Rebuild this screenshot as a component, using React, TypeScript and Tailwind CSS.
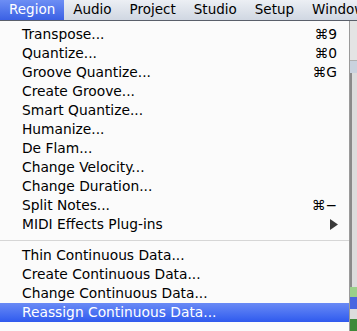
import React from 'react';

type Item = { label: string; shortcut?: string; submenu?: boolean; active?: boolean };

const topItems: Item[] = [
  { label: 'Transpose...', shortcut: '⌘9' },
  { label: 'Quantize...', shortcut: '⌘0' },
  { label: 'Groove Quantize...', shortcut: '⌘G' },
  { label: 'Create Groove...' },
  { label: 'Smart Quantize...' },
  { label: 'Humanize...' },
  { label: 'De Flam...' },
  { label: 'Change Velocity...' },
  { label: 'Change Duration...' },
  { label: 'Split Notes...', shortcut: '⌘−' },
  { label: 'MIDI Effects Plug-ins', submenu: true },
];

const bottomItems: Item[] = [
  { label: 'Thin Continuous Data...' },
  { label: 'Create Continuous Data...' },
  { label: 'Change Continuous Data...' },
  { label: 'Reassign Continuous Data...', active: true },
];

const menus = ['Region', 'Audio', 'Project', 'Studio', 'Setup', 'Window'];

function MenuRow({ item }: { item: Item }) {
  return (
    <div
      className={`flex h-[19px] items-center pl-[22px] pr-[12px] ${
        item.active ? 'bg-gradient-to-b from-[#6a8af5] to-[#2f59ee] text-white' : 'text-black'
      }`}
    >
      <span className="flex-1 whitespace-nowrap">{item.label}</span>
      {item.shortcut && <span className="whitespace-nowrap">{item.shortcut}</span>}
      {item.submenu && (
        <svg width="8" height="11" viewBox="0 0 8 11" className="mr-[-1px]">
          <path d="M0 0 L8 5.5 L0 11 Z" fill="#3a3a3a" />
        </svg>
      )}
    </div>
  );
}

export default function App() {
  return (
    <div
      className="flex h-[331px] w-[357px] flex-col overflow-hidden bg-[#d8d8d8] text-[13.8px] leading-none"
      style={{ fontFamily: '"DejaVu Sans", "Lucida Grande", sans-serif' }}
    >
      {/* menu bar */}
      <div className="flex h-[21px] shrink-0 items-stretch overflow-hidden border-b border-[#5a5f6a] bg-gradient-to-b from-[#eceff4] to-[#d0d7e2] text-[13.5px]">
        {menus.map((m, i) => (
          <div
            key={m}
            className={`flex items-center whitespace-nowrap px-[9px] ${
              i === 0 ? 'bg-gradient-to-b from-[#6d8ef4] to-[#3b60e4] text-white' : 'text-black'
            }`}
          >
            {m}
          </div>
        ))}
      </div>

      <div className="flex flex-1">
        {/* dropdown */}
        <div className="flex w-[349px] flex-col bg-[#fbfbfb] pt-[4px]">
          {topItems.map((it) => (
            <MenuRow key={it.label} item={it} />
          ))}
          <div className="flex h-[12px] items-center">
            <div className="h-px w-full bg-[#d6d6d6]" />
          </div>
          {bottomItems.map((it) => (
            <MenuRow key={it.label} item={it} />
          ))}
        </div>

        {/* window behind */}
        <div className="flex w-[8px] flex-col border-l border-[#9a9a9a] bg-[#dcdcdc]">
          <div className="h-[40px] border-b border-[#b0b0b0] bg-[#e4e4e4]" />
          <div className="h-[12px] bg-[#c9d2de]" />
          <div className="flex-1 border-l-2 border-[#8a8a8a]" />
          <div className="h-[10px] bg-[#9ad08a]" />
          <div className="h-[12px] bg-[#4a66e0]" />
          <div className="h-[10px] bg-[#dcdcdc]" />
          <div className="h-[12px] bg-[#3e8a3a]" />
        </div>
      </div>
    </div>
  );
}
